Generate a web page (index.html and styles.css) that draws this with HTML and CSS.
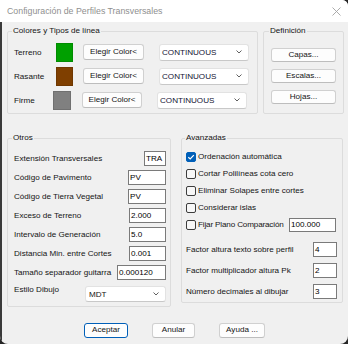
FILE: index.html
```html
<!DOCTYPE html>
<html lang="es">
<head>
    <meta charset="UTF-8">
    <title>Configuración de Perfiles Transversales</title>
    <link rel="stylesheet" href="styles.css">
</head>
<body>
    <div class="window">
        <div class="titlebar">
            <span class="title">Configuración de Perfiles Transversales</span>
            <svg class="close" width="9" height="9" viewBox="0 0 9 9">
                <path d="M0.5 0.5 L8.5 8.5 M8.5 0.5 L0.5 8.5" stroke="#a2a2a2" stroke-width="0.9" fill="none"/>
            </svg>
        </div>

        <div class="dialog">
            <div class="top-row">
                <fieldset class="group group-colores">
                    <legend>Colores y Tipos de línea</legend>

                    <div class="color-row">
                        <span class="lbl">Terreno</span>
                        <span class="swatch swatch-green"></span>
                        <button class="btn btn-color">Elegir Color&lt;</button>
                        <div class="combo combo-line">
                            <span>CONTINUOUS</span>
                            <svg class="chevron" width="6" height="4" viewBox="0 0 6 4"><path d="M0.5 0.5 L3 3 L5.5 0.5" stroke="#606060" fill="none"/></svg>
                        </div>
                    </div>

                    <div class="color-row">
                        <span class="lbl">Rasante</span>
                        <span class="swatch swatch-brown"></span>
                        <button class="btn btn-color">Elegir Color&lt;</button>
                        <div class="combo combo-line">
                            <span>CONTINUOUS</span>
                            <svg class="chevron" width="6" height="4" viewBox="0 0 6 4"><path d="M0.5 0.5 L3 3 L5.5 0.5" stroke="#606060" fill="none"/></svg>
                        </div>
                    </div>

                    <div class="color-row color-row-firme">
                        <span class="lbl">Firme</span>
                        <span class="swatch swatch-grey"></span>
                        <button class="btn btn-color">Elegir Color&lt;</button>
                        <div class="combo combo-line">
                            <span>CONTINUOUS</span>
                            <svg class="chevron" width="6" height="4" viewBox="0 0 6 4"><path d="M0.5 0.5 L3 3 L5.5 0.5" stroke="#606060" fill="none"/></svg>
                        </div>
                    </div>
                </fieldset>

                <fieldset class="group group-def">
                    <legend>Definición</legend>
                    <button class="btn btn-def">Capas...</button>
                    <button class="btn btn-def">Escalas...</button>
                    <button class="btn btn-def">Hojas...</button>
                </fieldset>
            </div>

            <div class="mid-row">
                <fieldset class="group group-otros">
                    <legend>Otros</legend>
                    <div class="field-row"><span>Extensión Transversales</span><span class="input w-22">TRA</span></div>
                    <div class="field-row"><span>Código de Pavimento</span><span class="input w-38">PV</span></div>
                    <div class="field-row"><span>Código de Tierra Vegetal</span><span class="input w-38">PV</span></div>
                    <div class="field-row"><span>Exceso de Terreno</span><span class="input w-37">2.000</span></div>
                    <div class="field-row"><span>Intervalo de Generación</span><span class="input w-37">5.0</span></div>
                    <div class="field-row"><span>Distancia Min. entre Cortes</span><span class="input w-37">0.001</span></div>
                    <div class="field-row"><span>Tamaño separador guitarra</span><span class="input w-49">0.000120</span></div>
                    <div class="field-row field-row-style">
                        <span class="style-lbl">Estilo Dibujo</span>
                        <div class="combo combo-style">
                            <span>MDT</span>
                            <svg class="chevron" width="6" height="4" viewBox="0 0 6 4"><path d="M0.5 0.5 L3 3 L5.5 0.5" stroke="#606060" fill="none"/></svg>
                        </div>
                    </div>
                </fieldset>

                <fieldset class="group group-avanz">
                    <legend>Avanzadas</legend>
                    <div class="check-row">
                        <span class="check checked">
                            <svg width="10" height="10" viewBox="0 0 10 10"><path d="M2.3 5.2 L4.2 7 L7.8 3.2" stroke="#fff" stroke-width="1.2" fill="none"/></svg>
                        </span>
                        <span>Ordenación automática</span>
                    </div>
                    <div class="check-row"><span class="check"></span><span>Cortar Polilíneas cota cero</span></div>
                    <div class="check-row"><span class="check"></span><span>Eliminar Solapes entre cortes</span></div>
                    <div class="check-row"><span class="check"></span><span>Considerar islas</span></div>
                    <div class="check-row">
                        <span class="check"></span><span class="tight">Fijar Plano Comparación</span>
                        <span class="input w-47 input-plano">100.000</span>
                    </div>

                    <div class="factors">
                        <div class="factor-row"><span>Factor altura texto sobre perfil</span><span class="input w-24">4</span></div>
                        <div class="factor-row"><span>Factor multiplicador altura Pk</span><span class="input w-24">2</span></div>
                        <div class="factor-row"><span>Número decimales al dibujar</span><span class="input w-24">3</span></div>
                    </div>
                </fieldset>
            </div>

            <div class="actions">
                <button class="btn btn-action btn-default w-44">Aceptar</button>
                <button class="btn btn-action w-43">Anular</button>
                <button class="btn btn-action w-46">Ayuda ...</button>
            </div>
        </div>
    </div>
</body>
</html>
```

FILE: styles.css
```css
:root {
    --face: #f0f0f0;
    --group-border: #dcdcdc;
    --btn-border: #d0d0d0;
    --input-border: #7a7a7a;
    --accent: #005fb8;
    --text: #141414;
}

html, body {
    margin: 0;
    padding: 0;
}

body {
    background: #262626;
    width: 348px;
    height: 344px;
    overflow: hidden;
    font-family: "Liberation Sans", Arial, sans-serif;
    font-size: 8.1px;
    color: var(--text);
    white-space: nowrap;
}

.window {
    width: 348px;
    height: 344px;
    background: var(--face);
    border-radius: 0 6px 8px 8px;
    overflow: hidden;
    display: flex;
    flex-direction: column;
}

/* title bar */
.titlebar {
    height: 22px;
    flex: none;
    background: #ffffff;
    display: flex;
    align-items: center;
    justify-content: space-between;
    padding: 0 7px 0 7px;
}

.title {
    font-size: 8.8px;
    color: #8f8f8f;
}

.close {
    display: block;
}

/* dialog body */
.dialog {
    flex: 1;
    padding: 0 0 0 7px;
    box-shadow: inset 2px 0 0 #3a3a3a;
}

button {
    font-family: inherit;
    font-size: inherit;
    color: var(--text);
}

.btn {
    display: block;
    box-sizing: border-box;
    padding: 0;
    margin: 0;
    background: #fdfdfd;
    border: 1px solid var(--btn-border);
    border-bottom-color: #bdbdbd;
    border-radius: 3px;
    text-align: center;
    line-height: 1;
}

.group {
    margin: 0;
    padding: 0;
    border: 1px solid var(--group-border);
    border-radius: 2px;
    box-sizing: border-box;
    min-width: 0;
}

.group legend {
    padding: 0 1px;
    margin-left: -2px;
    line-height: 10px;
    height: 10px;
}

/* top row */
.top-row {
    display: flex;
    align-items: stretch;
    margin-top: 4px;
}

.group-colores {
    width: 251px;
    padding: 4px 0 1px 6px;
}

.group-def {
    width: 81px;
    margin-left: 5px;
    padding: 12px 6px 0 7px;
    display: flex;
    flex-direction: column;
    gap: 7px;
}

.color-row {
    height: 24px;
    display: flex;
    align-items: center;
}

.lbl {
    width: 42px;
    flex: none;
}

.swatch {
    width: 17px;
    height: 19px;
    flex: none;
    box-sizing: border-box;
    border: 1px solid rgba(0, 0, 0, 0.12);
}

.swatch-green { background: #00a000; }
.swatch-brown { background: #7f3f00; }
.swatch-grey { background: #808080; }

.btn-color {
    width: 61px;
    height: 16px;
    margin-left: 10px;
}

.color-row-firme .lbl { width: 39px; }
.color-row-firme .swatch { width: 18px; }
.color-row-firme .btn-color { margin-left: 11px; width: 60px; }

.combo {
    box-sizing: border-box;
    background: #ffffff;
    border: 1px solid #e2e2e2;
    border-bottom-color: #c8c8c8;
    border-radius: 3px;
    display: flex;
    align-items: center;
    justify-content: space-between;
    padding: 0 6px 0 2px;
}

.combo-line {
    width: 90px;
    height: 17px;
    margin-left: 15px;
    color: #121232;
}

.chevron {
    display: block;
}

.btn-def {
    width: 65px;
    height: 14px;
}

/* middle row */
.mid-row {
    display: flex;
    align-items: flex-start;
    margin-top: 19px;
}

.group-otros {
    width: 164px;
    padding: 6px 4px 4px 6px;
}

.group-avanz {
    width: 162px;
    margin-left: 10px;
    padding: 5px 5px 0 4px;
}

.group-avanz legend {
    margin-left: -1px;
}

.field-row {
    height: 19px;
    display: flex;
    align-items: center;
    justify-content: space-between;
}

.field-row-style {
    height: 16px;
    margin-top: 4px;
    align-items: flex-start;
}

.style-lbl {
    line-height: 10px;
    margin-top: -1px;
}

.combo-style {
    width: 81px;
    height: 16px;
    padding-left: 3px;
}

.input {
    display: block;
    box-sizing: border-box;
    height: 15px;
    line-height: 13px;
    padding: 0 1px;
    background: #ffffff;
    border: 1px solid var(--input-border);
    color: #000;
    overflow: hidden;
}

.w-22 { width: 22px; }
.w-24 { width: 24px; }
.w-37 { width: 37px; }
.w-38 { width: 38px; }
.w-47 { width: 47px; }
.w-49 { width: 49px; }

.check-row {
    height: 17px;
    display: flex;
    align-items: center;
    gap: 2px;
}

.check {
    width: 10px;
    height: 10px;
    flex: none;
    box-sizing: border-box;
    border: 1px solid #3c3c3c;
    border-radius: 2px;
    background: #f7f7f7;
}

.check.checked {
    background: var(--accent);
    border-color: var(--accent);
    display: flex;
    align-items: center;
    justify-content: center;
}

.check.checked svg {
    display: block;
    flex: none;
}

.tight {
    letter-spacing: -0.15px;
}

.input-plano {
    height: 14px;
    line-height: 12px;
    margin-left: auto;
    margin-right: 1px;
}

.factors {
    margin-top: 6px;
}

.factor-row {
    height: 21px;
    display: flex;
    align-items: center;
    justify-content: space-between;
}

/* bottom buttons */
.actions {
    display: flex;
    gap: 24px;
    margin-top: 16px;
    padding-left: 77px;
}

.btn-action {
    height: 15px;
}

.btn-default {
    border: 1px solid var(--accent);
    box-shadow: inset 0 0 0 1px #ffffff;
}

.w-43 { width: 43px; }
.w-44 { width: 44px; }
.w-46 { width: 46px; }
```
